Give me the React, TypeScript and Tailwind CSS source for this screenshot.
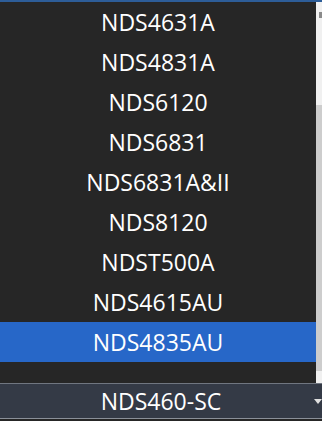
const items = [
  "NDS4631A",
  "NDS4831A",
  "NDS6120",
  "NDS6831",
  "NDS6831A&II",
  "NDS8120",
  "NDST500A",
  "NDS4615AU",
  "NDS4835AU",
];

const selected = "NDS4835AU";

export default function App() {
  return (
    <div
      className="w-[322px] h-[421px] bg-[#262626] flex flex-col overflow-hidden"
      style={{ fontFamily: '"Open Sans", "Noto Sans", sans-serif' }}
    >
      <div className="h-[2px] bg-[#2d5d98]" />
      <div className="flex h-[381px]">
        <div className="flex-1">
          {items.map((name) => (
            <div
              key={name}
              className={
                name === selected
                  ? "h-10 flex items-center justify-center text-[23px] text-white bg-[#2767c8]"
                  : "h-10 flex items-center justify-center text-[23px] text-white"
              }
            >
              {name}
            </div>
          ))}
        </div>
        <div className="w-[6px] bg-[#f0f0f0] flex flex-col">
          <div className="h-[10px]" />
          <div className="h-[6px] w-[3px] ml-[3px] bg-[#8a8a8a]" />
          <div className="h-[87px]" />
          <div className="flex-1 bg-[#cdcdcd]" />
          <div className="h-[12px]" />
        </div>
      </div>
      <div className="h-px bg-[#707680]" />
      <div className="h-[34px] bg-[#343a46] flex items-center relative">
        <div className="flex-1 text-center text-[23px] text-white">NDS460-SC</div>
        <div className="absolute right-0 top-[15px] w-0 h-0 border-l-[4px] border-r-[4px] border-t-[5px] border-l-transparent border-r-transparent border-t-[#e0e0e0]" />
      </div>
      <div className="h-px bg-[#8a8f98]" />
      <div className="flex-1 bg-[#262626]" />
    </div>
  );
}
